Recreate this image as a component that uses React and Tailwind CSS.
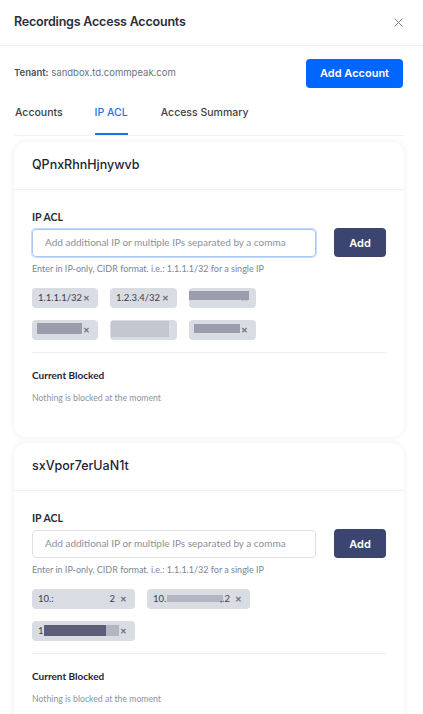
import React from 'react';
import { X } from 'lucide-react';

const heading = { fontFamily: 'Inter, "Noto Sans", sans-serif' };
const body = { fontFamily: 'Lato, "Noto Sans", sans-serif' };

const Chip = ({ label, redact, width = 'w-[66px]' }) => (
  <div className={`relative flex h-[20px] ${width} items-center justify-between rounded bg-[#d9dce3] pl-[6px] pr-[8px] text-[9.5px] text-[#3a3f4b]`}>
    <span className="whitespace-nowrap">{label}</span>
    <span className="text-[8px] font-bold text-[#6b7080]">✕</span>
    {redact}
  </div>
);

const Card = ({ name, focused, chips }) => (
  <div className="rounded-xl bg-white shadow-[0_0_6px_rgba(0,0,0,0.07)]">
    <div className="border-b border-[#eef0f4] px-[18px] py-[14px]">
      <h3 className="text-[12.5px] font-medium text-[#1f2230]" style={heading}>{name}</h3>
    </div>
    <div className="px-[18px] pt-[20px] pb-[33px]" style={body}>
      <label className="block text-[10.5px] font-bold text-[#2a2d38]">IP ACL</label>
      <div className="mt-[3px] flex items-center gap-[18px]">
        <div className={`flex h-[28px] w-[284px] items-center overflow-hidden whitespace-nowrap rounded border px-[12px] text-[10px] text-[#8a8f9c] ${focused ? 'border-[#a9c8f5] ring-1 ring-[#c6dbf9]' : 'border-[#dde1e7]'}`}>
          Add additional IP or multiple IPs separated by a comma
        </div>
        <button className="h-[29px] w-[52px] rounded bg-[#3c4470] text-[11px] font-semibold text-white" style={heading}>Add</button>
      </div>
      <p className="mt-[5px] text-[9px] text-[#7b8597]">Enter in IP-only, CIDR format. i.e.: 1.1.1.1/32 for a single IP</p>
      <div className="mt-[12px] flex w-[284px] flex-wrap gap-x-[12px] gap-y-[12px]">
        {chips}
      </div>
      <div className="mt-[12px] border-b border-[#eceef2]" />
      <h4 className="mt-[15px] text-[10px] font-bold text-[#1f2230]">Current Blocked</h4>
      <p className="mt-[8px] text-[8.7px] text-[#8a93a6]">Nothing is blocked at the moment</p>
    </div>
  </div>
);

const Redact = ({ className }) => <span className={`absolute ${className}`} />;

export default function App() {
  const chips1 = [
    <Chip key="a" label="1.1.1.1/32" />,
    <Chip key="b" label="1.2.3.4/32" width="w-[67px]" />,
    <Chip key="c" label="" width="w-[67px]" redact={<Redact className="left-[0px] top-[3px] h-[9px] w-[60px] bg-[#9a9dab]" />} />,
    <Chip key="d" label="" redact={<Redact className="left-[5px] top-[3px] h-[11px] w-[45px] bg-[#9a9dab]" />} />,
    <Chip key="e" label="" width="w-[67px]" redact={<Redact className="left-[1px] top-[1px] h-[16px] w-[58px] bg-[#c4c6d0]" />} />,
    <Chip key="f" label="" width="w-[67px]" redact={<Redact className="left-[5px] top-[4px] h-[9px] w-[46px] bg-[#9a9dab]" />} />,
  ];
  const chips2 = [
    <Chip key="a" label="10.:" width="w-[103px]" redact={<span className="absolute right-[20px] text-[9.5px] text-[#3a3f4b]">2</span>} />,
    <Chip key="b" label="10." width="w-[103px]" redact={<><Redact className="left-[20px] top-[6px] h-[7px] w-[56px] bg-[#b3b6c2]" /><span className="absolute right-[20px] text-[9.5px] text-[#3a3f4b]">,.2</span></>} />,
    <Chip key="c" label="1" width="w-[103px]" redact={<><Redact className="left-[12px] top-[4px] h-[11px] w-[62px] bg-[#5a5e78]" /><Redact className="left-[74px] top-[4px] h-[11px] w-[13px] bg-[#b3b6c2]" /></>} />,
  ];

  return (
    <div className="min-h-screen w-[423px] bg-white" style={body}>
      <div className="flex h-[46px] items-center justify-between border-b border-[#eef1f5] pl-[14px] pr-[17px]">
        <h2 className="text-[12.5px] font-semibold tracking-[-0.2px] text-[#2b2e38]" style={heading}>Recordings Access Accounts</h2>
        <X className="h-[15px] w-[15px] text-[#6b6f7a]" strokeWidth={1.3} />
      </div>
      <div className="pl-[14px] pr-[19px]">
        <div className="mt-[13px] flex items-center justify-between pr-[1px]">
          <p className="text-[9.5px] text-[#6b7180]" style={heading}>
            <span className="font-semibold text-[#4b5060]">Tenant:</span> sandbox.td.commpeak.com
          </p>
          <button className="h-[29px] w-[97px] rounded bg-[#0066ff] text-[11px] font-semibold text-white" style={heading}>Add Account</button>
        </div>
        <div className="mt-[9px] flex border-b border-[#eef1f5] text-[10.5px] font-medium text-[#3a3e4a]" style={heading}>
          <div className="pl-[1px] pb-[14px] pt-[8px]">Accounts</div>
          <div className="ml-[32px] border-b-2 border-[#1a73e8] pb-[12px] pt-[8px] text-[#1a73e8]">IP ACL</div>
          <div className="ml-[33px] pb-[14px] pt-[8px]">Access Summary</div>
        </div>
        <div className="mt-[6px] flex flex-col gap-[6px]">
          <Card name="QPnxRhnHjnywvb" focused chips={chips1} />
          <Card name="sxVpor7erUaN1t" chips={chips2} />
        </div>
      </div>
    </div>
  );
}
